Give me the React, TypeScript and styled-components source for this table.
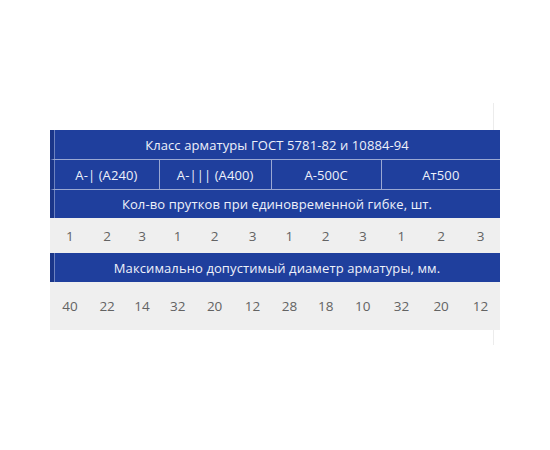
import React from "react";
import styled, { createGlobalStyle } from "styled-components";

const GlobalStyle = createGlobalStyle`
  html, body {
    margin: 0;
    padding: 0;
    background: #ffffff;
  }
  body {
    font-family: "Open Sans", "DejaVu Sans", sans-serif;
  }
`;

const classes = ["А-| (А240)", "А-||| (А400)", "А-500С", "Ат500"];
const bars = [1, 2, 3, 1, 2, 3, 1, 2, 3, 1, 2, 3];
const diameters = [40, 22, 14, 32, 20, 12, 28, 18, 10, 32, 20, 12];

// faint frame line on the right, partly hidden under the wider table
const Frame = styled.div`
  margin: 103px 0 0 50px;
  width: 443px;
  padding: 27px 0 15px;
  border-right: 1px solid #ececec;
`;

const Table = styled.div`
  width: 450px;
  display: grid;
  grid-template-columns: 40fr 34.5fr 35.5fr 36fr 38fr 38fr 36fr 36.5fr 38fr 39.5fr 40fr 39fr;
  background: #efefef;
`;

const HeadCell = styled.div<{ $span: number; $h: number; $first?: boolean; $last?: boolean; $line?: boolean }>`
  grid-column: span ${(p) => p.$span};
  height: ${(p) => p.$h}px;
  box-sizing: border-box;
  display: flex;
  align-items: center;
  justify-content: center;
  background: #1f3f9d;
  color: #eef1fa;
  font-size: 13px;
  letter-spacing: 0.1px;
  white-space: nowrap;
  border-left: ${(p) => (p.$first ? "4px solid #1a3588" : "none")};
  box-shadow: ${(p) => (p.$first ? "inset 1px 0 rgba(255,255,255,0.35)" : "none")};
  border-right: ${(p) => (p.$last ? "none" : "1px solid rgba(255,255,255,0.55)")};
  border-bottom: ${(p) => (p.$line ? "1px solid rgba(255,255,255,0.55)" : "none")};
`;

const ValueCell = styled.div<{ $tall?: boolean }>`
  height: ${(p) => (p.$tall ? 48 : 35)}px;
  display: flex;
  align-items: center;
  justify-content: center;
  color: #636363;
  font-size: 13.5px;
  font-weight: 400;
`;

export default function App() {
  return (
    <>
      <GlobalStyle />
      <Frame>
        <Table>
          <HeadCell $span={12} $h={30} $first $last $line>
            Класс арматуры ГОСТ 5781-82 и 10884-94
          </HeadCell>
          {classes.map((name, i) => (
            <HeadCell
              key={name}
              $span={3}
              $h={30}
              $first={i === 0}
              $last={i === classes.length - 1}
              $line
            >
              {name}
            </HeadCell>
          ))}
          <HeadCell $span={12} $h={28} $first $last>
            Кол-во прутков при единовременной гибке, шт.
          </HeadCell>
          {bars.map((n, i) => (
            <ValueCell key={"b" + i}>{n}</ValueCell>
          ))}
          <HeadCell $span={12} $h={29} $first $last>
            Максимально допустимый диаметр арматуры, мм.
          </HeadCell>
          {diameters.map((n, i) => (
            <ValueCell key={"d" + i} $tall>
              {n}
            </ValueCell>
          ))}
        </Table>
      </Frame>
    </>
  );
}
